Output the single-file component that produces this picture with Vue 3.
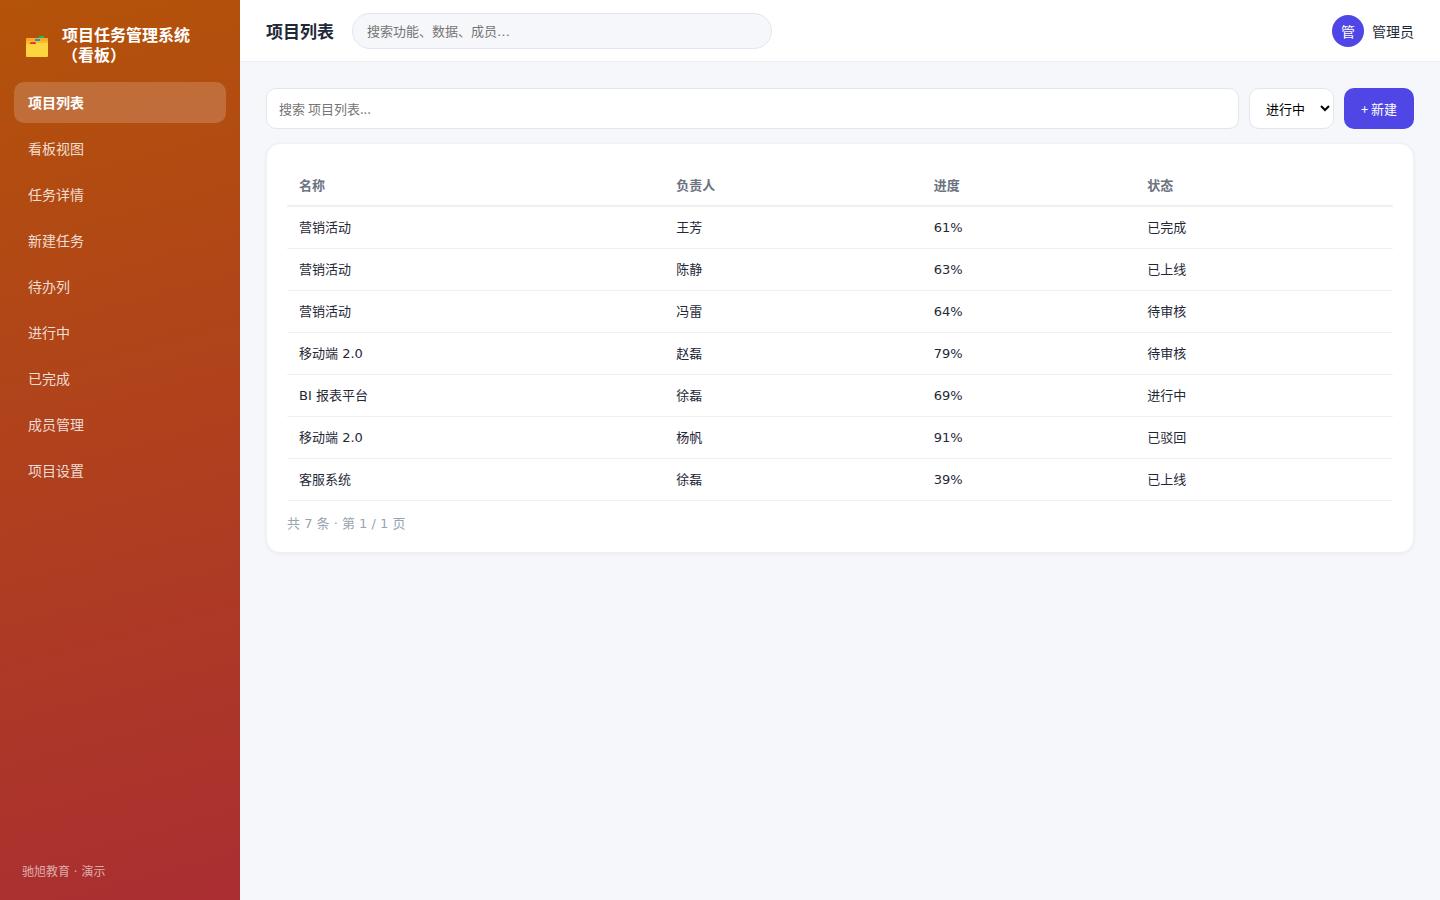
<script setup>
import { ref } from 'vue'

const navItems = ['项目列表', '看板视图', '任务详情', '新建任务', '待办列', '进行中', '已完成', '成员管理', '项目设置']
const active = ref('项目列表')
const globalQuery = ref('')
const listQuery = ref('')
const status = ref('进行中')
const statuses = ['进行中', '已完成', '待审核', '已上线', '已驳回']

const rows = [
  { name: '营销活动', owner: '王芳', progress: '61%', state: '已完成' },
  { name: '营销活动', owner: '陈静', progress: '63%', state: '已上线' },
  { name: '营销活动', owner: '冯雷', progress: '64%', state: '待审核' },
  { name: '移动端 2.0', owner: '赵磊', progress: '79%', state: '待审核' },
  { name: 'BI 报表平台', owner: '徐磊', progress: '69%', state: '进行中' },
  { name: '移动端 2.0', owner: '杨帆', progress: '91%', state: '已驳回' },
  { name: '客服系统', owner: '徐磊', progress: '39%', state: '已上线' },
]
</script>

<template>
  <div class="app">
    <aside class="sidebar">
      <div class="brand">
        <svg class="logo" viewBox="0 0 22 22" aria-hidden="true">
          <path d="M13 2V0h5v2z" fill="#00c56b" />
          <path d="M0 3a1 1 0 0 1 1-1h20a1 1 0 0 1 1 1v8H0z" fill="#ffa727" />
          <path d="M9 5V3h5v2z" fill="#0c9be8" />
          <path d="M0 6q0-1 1-1h20q1 0 1 1v5H0z" fill="#ffb92e" />
          <path d="M0 9q0-1 1-1h8l1-1h11q1 0 1 1v12a1 1 0 0 1-1 1H1a1 1 0 0 1-1-1z" fill="#fdd53f" />
          <path d="M4 8V7l1-1h4l1 1v1z" fill="#ff2c2c" />
        </svg>
        <span class="brand-name">项目任务管理系统（看板）</span>
      </div>
      <nav class="nav">
        <a
          v-for="item in navItems"
          :key="item"
          href="#"
          :class="['nav-item', { active: item === active }]"
          @click.prevent="active = item"
        >{{ item }}</a>
      </nav>
      <div class="sidebar-foot">驰旭教育 · 演示</div>
    </aside>

    <div class="main">
      <header class="topbar">
        <h1 class="title">项目列表</h1>
        <input v-model="globalQuery" class="global-search" type="text" aria-label="全局搜索" placeholder="搜索功能、数据、成员…" />
        <div class="user">
          <span class="avatar">管</span>
          <span>管理员</span>
        </div>
      </header>

      <main class="content">
        <div class="toolbar">
          <input v-model="listQuery" class="list-search" type="text" aria-label="搜索项目列表" placeholder="搜索 项目列表..." />
          <select v-model="status" class="status" aria-label="状态">
            <option v-for="s in statuses" :key="s">{{ s }}</option>
          </select>
          <button class="create" type="button">+ 新建</button>
        </div>

        <section class="card">
          <table class="table">
            <colgroup>
              <col class="col-name" />
              <col class="col-owner" />
              <col class="col-progress" />
              <col />
            </colgroup>
            <thead>
              <tr>
                <th>名称</th>
                <th>负责人</th>
                <th>进度</th>
                <th>状态</th>
              </tr>
            </thead>
            <tbody>
              <tr v-for="(row, i) in rows" :key="i">
                <td>{{ row.name }}</td>
                <td>{{ row.owner }}</td>
                <td>{{ row.progress }}</td>
                <td>{{ row.state }}</td>
              </tr>
            </tbody>
          </table>
          <div class="pager">共 7 条 · 第 1 / 1 页</div>
        </section>
      </main>
    </div>
  </div>
</template>

<style>
body {
  margin: 0;
  background: #f5f7fb;
}
</style>

<style scoped>
* {
  box-sizing: border-box;
}
.app {
  display: flex;
  min-height: 100vh;
  color: #1f2937;
  font-family: "DejaVu Sans", "Noto Sans CJK SC", sans-serif;
  font-size: 14px;
  line-height: 20px;
}
.brand,
.topbar,
.toolbar {
  font-family: "Noto Sans CJK SC", sans-serif;
}
input,
select,
button {
  font-family: inherit;
}
.sidebar {
  display: flex;
  flex-direction: column;
  flex: none;
  width: 240px;
  padding: 24px 14px 18px;
  color: #fff;
  background: linear-gradient(165deg, #b45309, #aa2e32);
}
.brand {
  display: flex;
  align-items: center;
  gap: 14px;
  padding: 0 12px 16px;
}
.logo {
  flex: none;
  width: 22px;
  height: 22px;
  margin-top: 6px;
}
.brand-name {
  font-size: 16px;
  font-weight: 700;
  line-height: 20px;
}
.nav {
  display: flex;
  flex-direction: column;
  gap: 5px;
  padding-top: 2px;
}
.nav-item {
  padding: 11px 14px 10px;
  border-radius: 10px;
  color: rgba(255, 255, 255, 0.82);
  text-decoration: none;
}
.nav-item.active {
  background: rgba(255, 255, 255, 0.18);
  color: #fff;
  font-weight: 700;
}
.sidebar-foot {
  margin-top: auto;
  padding: 0 8px;
  color: rgba(255, 255, 255, 0.6);
  font-size: 12px;
}
.main {
  flex: 1;
  min-width: 0;
}
.topbar {
  display: flex;
  align-items: center;
  gap: 18px;
  height: 62px;
  padding: 0 26px;
  background: #fff;
  border-bottom: 1px solid #eceef4;
}
.title {
  margin: 0;
  font-size: 17px;
  font-weight: 700;
}
.global-search {
  width: 420px;
  height: 36px;
  padding: 1px 14px 0;
  border: 1px solid #e3e6ef;
  border-radius: 18px;
  background: #f5f7fb;
  font-family: "DejaVu Sans", "Noto Sans CJK SC", sans-serif;
  font-size: 13px;
}
input::placeholder {
  color: #757575;
}
.user {
  display: flex;
  align-items: center;
  gap: 8px;
  margin-left: auto;
}
.avatar {
  width: 32px;
  height: 32px;
  border-radius: 50%;
  background: #4f46e5;
  color: #fff;
  line-height: 32px;
  text-align: center;
}
.content {
  padding: 26px;
}
.toolbar {
  display: flex;
  gap: 10px;
  height: 41px;
  margin-bottom: 14px;
}
.list-search {
  flex: 1;
  min-width: 0;
  padding: 0 12px;
  border: 1px solid #e3e6ef;
  border-radius: 10px;
  background: #fff;
  font-size: 13px;
}
.status {
  width: 85px;
  padding: 0 0 0 12px;
  border: 1px solid #e3e6ef;
  border-radius: 10px;
  background: #fff;
  color: #000;
  font-size: 13px;
}
.create {
  width: 70px;
  padding: 0;
  border: 0;
  border-radius: 10px;
  background: #4f46e5;
  color: #fff;
  font-size: 13px;
}
.card {
  padding: 20px;
  border: 1px solid #eef0f5;
  border-radius: 14px;
  background: #fff;
  box-shadow: 0 1px 4px rgba(31, 41, 80, 0.05);
}
.table {
  width: 100%;
  border-collapse: collapse;
  font-size: 13px;
}
.col-name {
  width: 34.1%;
}
.col-owner {
  width: 23.3%;
}
.col-progress {
  width: 19.3%;
}
th,
td {
  height: 42px;
  padding: 2px 12px 0;
  text-align: left;
  border-bottom: 1px solid #eef0f4;
}
th {
  color: #6b7280;
  font-weight: 700;
  border-bottom: 2px solid #eef0f5;
}
.pager {
  padding-top: 14px;
  color: #9aa3b2;
  font-size: 13px;
  line-height: 17px;
}
</style>
